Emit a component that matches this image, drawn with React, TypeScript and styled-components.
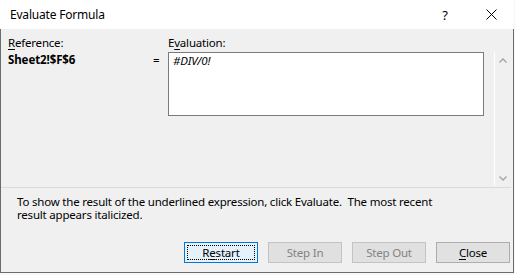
import React from "react";
import styled, { createGlobalStyle, css } from "styled-components";

const GlobalStyle = createGlobalStyle`
  html, body {
    margin: 0;
    padding: 0;
    background: #f7f7f7;
  }
  body {
    font-family: "Noto Sans", "Open Sans", sans-serif;
    font-size: 11.5px;
    letter-spacing: -0.2px;
    color: #000;
  }
`;

const Window = styled.div`
  width: 514px;
  height: 273px;
  display: flex;
  flex-direction: column;
  box-sizing: border-box;
`;

const TitleBar = styled.div`
  height: 29px;
  background: #fff;
  display: flex;
  align-items: center;
  padding-left: 10px;
  box-sizing: border-box;
`;

const Title = styled.div`
  flex: 1;
  font-size: 12px;
`;

const TitleButton = styled.div`
  width: 46px;
  height: 29px;
  display: flex;
  align-items: center;
  justify-content: center;
  font-size: 13px;
`;

const Body = styled.div`
  flex: 1;
  background: #f0f0f0;
  border: 1px solid #6b6b6b;
  border-top: none;
  display: flex;
  flex-direction: column;
`;

const TopArea = styled.div`
  height: 158px;
  display: flex;
  padding-left: 7px;
  border-bottom: 1px solid #dadada;
  margin-right: 2px;
`;

const Column = styled.div<{ $width: number }>`
  width: ${(p) => p.$width}px;
  display: flex;
  flex-direction: column;
  padding-top: 6px;
`;

const Label = styled.div`
  height: 16px;
  line-height: 16px;
`;

const Value = styled.div<{ $bold?: boolean }>`
  margin-top: 1px;
  height: 16px;
  line-height: 16px;
  ${(p) =>
    p.$bold &&
    css`
      font-weight: 700;
      letter-spacing: -0.1px;
    `}
`;

const Spacer = styled.div`
  height: 16px;
`;

const EvalBox = styled.div`
  margin-top: 1px;
  width: 316px;
  height: 64px;
  box-sizing: border-box;
  background: #fff;
  border: 1px solid #7a7a7a;
  padding: 0 4px;
  font-style: italic;
  line-height: 16px;
`;

const ScrollTrack = styled.div`
  margin-left: 10px;
  margin-top: 23px;
  height: 134px;
  width: 17px;
  border-left: 1px solid #fff;
  display: flex;
  flex-direction: column;
  justify-content: space-between;
  align-items: center;
  padding: 6px 0 5px;
  box-sizing: border-box;
`;

const Hint = styled.p`
  margin: 0;
  padding: 7px 0 0 16px;
  line-height: 13px;
  height: 47px;
  box-sizing: border-box;
  white-space: pre-wrap;
`;

const ButtonRow = styled.div`
  display: flex;
  justify-content: flex-end;
  gap: 10px;
  padding-right: 3px;
  margin-top: 7px;
`;

const Button = styled.div<{ $variant?: "default" | "disabled" | "focused" }>`
  width: 74px;
  height: 21px;
  box-sizing: border-box;
  display: flex;
  align-items: center;
  justify-content: center;
  position: relative;
  background: #e1e1e1;
  border: 1px solid #adadad;
  ${(p) =>
    p.$variant === "disabled" &&
    css`
      background: #e0e0e0;
      border-color: #c3c3c3;
      color: #838383;
    `}
  ${(p) =>
    p.$variant === "focused" &&
    css`
      background: #e5f1fb;
      border-color: #0078d7;
      &::after {
        content: "";
        position: absolute;
        inset: 2px;
        border: 1px dotted #000;
      }
    `}
`;

const U = styled.span`
  text-decoration: underline;
  text-underline-offset: 2px;
`;

const Chevron = ({ up }: { up?: boolean }) => (
  <svg width="8" height="5" viewBox="0 0 8 5">
    <path
      d={up ? "M0.5 4.5 L4 1 L7.5 4.5" : "M0.5 0.5 L4 4 L7.5 0.5"}
      fill="none"
      stroke="#a3a3a3"
      strokeWidth="1.3"
    />
  </svg>
);

export default function App() {
  return (
    <>
      <GlobalStyle />
      <Window>
        <TitleBar>
          <Title>Evaluate Formula</Title>
          <TitleButton>?</TitleButton>
          <TitleButton>
            <svg width="11" height="11" viewBox="0 0 11 11">
              <path d="M0.5 0.5 L10.5 10.5 M10.5 0.5 L0.5 10.5" stroke="#000" strokeWidth="1" />
            </svg>
          </TitleButton>
        </TitleBar>
        <Body>
          <TopArea>
            <Column $width={145}>
              <Label>
                <U>R</U>eference:
              </Label>
              <Value $bold>Sheet2!$F$6</Value>
            </Column>
            <Column $width={15}>
              <Spacer />
              <Value>=</Value>
            </Column>
            <Column $width={316}>
              <Label>
                E<U>v</U>aluation:
              </Label>
              <EvalBox>#DIV/0!</EvalBox>
            </Column>
            <ScrollTrack>
              <Chevron up />
              <Chevron />
            </ScrollTrack>
          </TopArea>
          <Hint>
            {"To show the result of the underlined expression, click Evaluate.  The most recent\nresult appears italicized."}
          </Hint>
          <ButtonRow>
            <Button $variant="focused">
              <span>
                R<U>e</U>start
              </span>
            </Button>
            <Button $variant="disabled">Step In</Button>
            <Button $variant="disabled">Step Out</Button>
            <Button>
              <span>
                <U>C</U>lose
              </span>
            </Button>
          </ButtonRow>
        </Body>
      </Window>
    </>
  );
}
